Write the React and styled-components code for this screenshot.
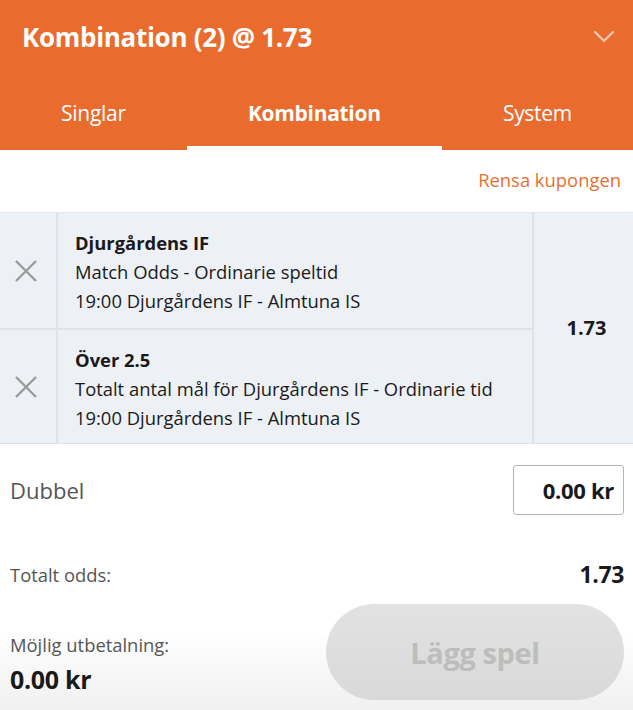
import React from "react";
import styled, { createGlobalStyle } from "styled-components";

const GlobalStyle = createGlobalStyle`
    html, body {
        margin: 0;
        padding: 0;
        background: #ffffff;
    }
    body {
        font-family: "Open Sans", "Noto Sans", sans-serif;
        color: #1a1a1a;
    }
`;

const Slip = styled.div`
    width: 633px;
    height: 710px;
    display: flex;
    flex-direction: column;
    overflow: hidden;
`;

const Header = styled.div`
    background: #e96b2e;
    color: #ffffff;
`;

const TitleRow = styled.div`
    height: 76px;
    display: flex;
    align-items: center;
    justify-content: space-between;
    padding: 0 18px 3px 22px;
    box-sizing: border-box;
`;

const Title = styled.div`
    font-size: 26px;
    font-weight: 700;
    letter-spacing: -0.3px;
`;

const Tabs = styled.div`
    display: flex;
    height: 74px;
`;

const Tab = styled.div`
    flex: 1 1 auto;
    display: flex;
    align-items: center;
    justify-content: center;
    padding-top: 4px;
    font-size: 21px;
    letter-spacing: -0.3px;
    font-weight: ${(p) => (p.$active ? 700 : 500)};
    border-bottom: 4px solid ${(p) => (p.$active ? "#ffffff" : "transparent")};
`;

const ClearRow = styled.div`
    height: 62px;
    display: flex;
    align-items: center;
    justify-content: flex-end;
    padding: 0 12px 4px 0;
    box-sizing: border-box;
`;

const ClearLink = styled.span`
    color: #e8702f;
    font-size: 18.4px;
`;

const BetList = styled.div`
    display: flex;
    background: #edf0f4;
    border-top: 1px solid #e3e6ea;
    border-bottom: 1px solid #dfe2e6;
`;

const Selections = styled.div`
    flex: 1;
    display: flex;
    flex-direction: column;
`;

const Selection = styled.div`
    display: flex;
    height: 115px;
    box-sizing: border-box;
    border-top: ${(p) => (p.$first ? "none" : "2px solid #dfe2e7")};
`;

const RemoveCell = styled.div`
    width: 58px;
    display: flex;
    align-items: center;
    justify-content: center;
    padding-right: 4px;
    box-sizing: border-box;
    border-right: 2px solid #dfe2e7;
`;

const Info = styled.div`
    flex: 1;
    padding: 15px 0 0 17px;
    font-size: 18.4px;
    line-height: 29px;
`;

const Market = styled.div`
    font-weight: 700;
`;

const OddsCell = styled.div`
    width: 101px;
    box-sizing: border-box;
    display: flex;
    align-items: center;
    justify-content: center;
    border-left: 2px solid #dfe2e7;
    font-size: 20px;
    font-weight: 700;
    padding: 0 0 2px 6px;
`;

const Footer = styled.div`
    flex: 1;
    display: flex;
    flex-direction: column;
    padding: 21px 9px 0 10px;
    background: linear-gradient(to bottom, #ffffff 0%, #ffffff 70%, #f0f0f0 100%);
`;

const StakeRow = styled.div`
    display: flex;
    align-items: center;
    justify-content: space-between;
`;

const StakeLabel = styled.div`
    font-size: 22px;
    color: #555555;
`;

const StakeInput = styled.div`
    width: 111px;
    height: 50px;
    border: 1.5px solid #b5b5b5;
    border-radius: 3px;
    display: flex;
    align-items: center;
    justify-content: flex-end;
    padding-right: 9px;
    box-sizing: border-box;
    font-size: 22px;
    font-weight: 700;
    letter-spacing: -0.3px;
`;

const OddsRow = styled.div`
    display: flex;
    align-items: center;
    justify-content: space-between;
    margin-top: 43px;
`;

const SmallLabel = styled.div`
    font-size: 18.4px;
    color: #555555;
`;

const OddsValue = styled.div`
    font-size: 23px;
    font-weight: 700;
    letter-spacing: -0.4px;
`;

const PayoutValue = styled.div`
    font-size: 25px;
    font-weight: 700;
    letter-spacing: -0.3px;
`;

const BottomRow = styled.div`
    display: flex;
    align-items: center;
    justify-content: space-between;
    margin-top: 14px;
`;

const Payout = styled.div`
    display: flex;
    flex-direction: column;
    gap: 5px;
    padding-top: 24px;
`;

const PlaceButton = styled.button`
    width: 298px;
    height: 96px;
    border: none;
    border-radius: 48px;
    background: linear-gradient(to bottom, #e2e2e2, #d9d9d9);
    color: #bdbdbd;
    font-family: inherit;
    font-size: 29px;
    font-weight: 700;
    letter-spacing: -0.4px;
`;

function CloseIcon() {
    return (
        <svg width="24" height="24" viewBox="0 0 24 24">
            <path
                d="M2 2 L22 22 M22 2 L2 22"
                stroke="#9b9b9b"
                strokeWidth="2.4"
                fill="none"
            />
        </svg>
    );
}

function Chevron() {
    return (
        <svg width="22" height="14" viewBox="0 0 22 14">
            <path
                d="M2 2 L11 11 L20 2"
                stroke="#f7c7ad"
                strokeWidth="2.4"
                fill="none"
                strokeLinecap="round"
                strokeLinejoin="round"
            />
        </svg>
    );
}

const selections = [
    {
        market: "Djurgårdens IF",
        type: "Match Odds - Ordinarie speltid",
        event: "19:00 Djurgårdens IF - Almtuna IS"
    },
    {
        market: "Över 2.5",
        type: "Totalt antal mål för Djurgårdens IF - Ordinarie tid",
        event: "19:00 Djurgårdens IF - Almtuna IS"
    }
];

export default function App() {
    return (
        <Slip>
            <GlobalStyle />
            <Header>
                <TitleRow>
                    <Title>Kombination (2) @ 1.73</Title>
                    <Chevron />
                </TitleRow>
                <Tabs>
                    <Tab>Singlar</Tab>
                    <Tab $active>Kombination</Tab>
                    <Tab>System</Tab>
                </Tabs>
            </Header>
            <ClearRow>
                <ClearLink>Rensa kupongen</ClearLink>
            </ClearRow>
            <BetList>
                <Selections>
                    {selections.map((s, i) => (
                        <Selection key={i} $first={i === 0}>
                            <RemoveCell>
                                <CloseIcon />
                            </RemoveCell>
                            <Info>
                                <Market>{s.market}</Market>
                                <div>{s.type}</div>
                                <div>{s.event}</div>
                            </Info>
                        </Selection>
                    ))}
                </Selections>
                <OddsCell>1.73</OddsCell>
            </BetList>
            <Footer>
                <StakeRow>
                    <StakeLabel>Dubbel</StakeLabel>
                    <StakeInput>0.00 kr</StakeInput>
                </StakeRow>
                <OddsRow>
                    <SmallLabel>Totalt odds:</SmallLabel>
                    <OddsValue>1.73</OddsValue>
                </OddsRow>
                <BottomRow>
                    <Payout>
                        <SmallLabel>Möjlig utbetalning:</SmallLabel>
                        <PayoutValue>0.00 kr</PayoutValue>
                    </Payout>
                    <PlaceButton disabled>Lägg spel</PlaceButton>
                </BottomRow>
            </Footer>
        </Slip>
    );
}
